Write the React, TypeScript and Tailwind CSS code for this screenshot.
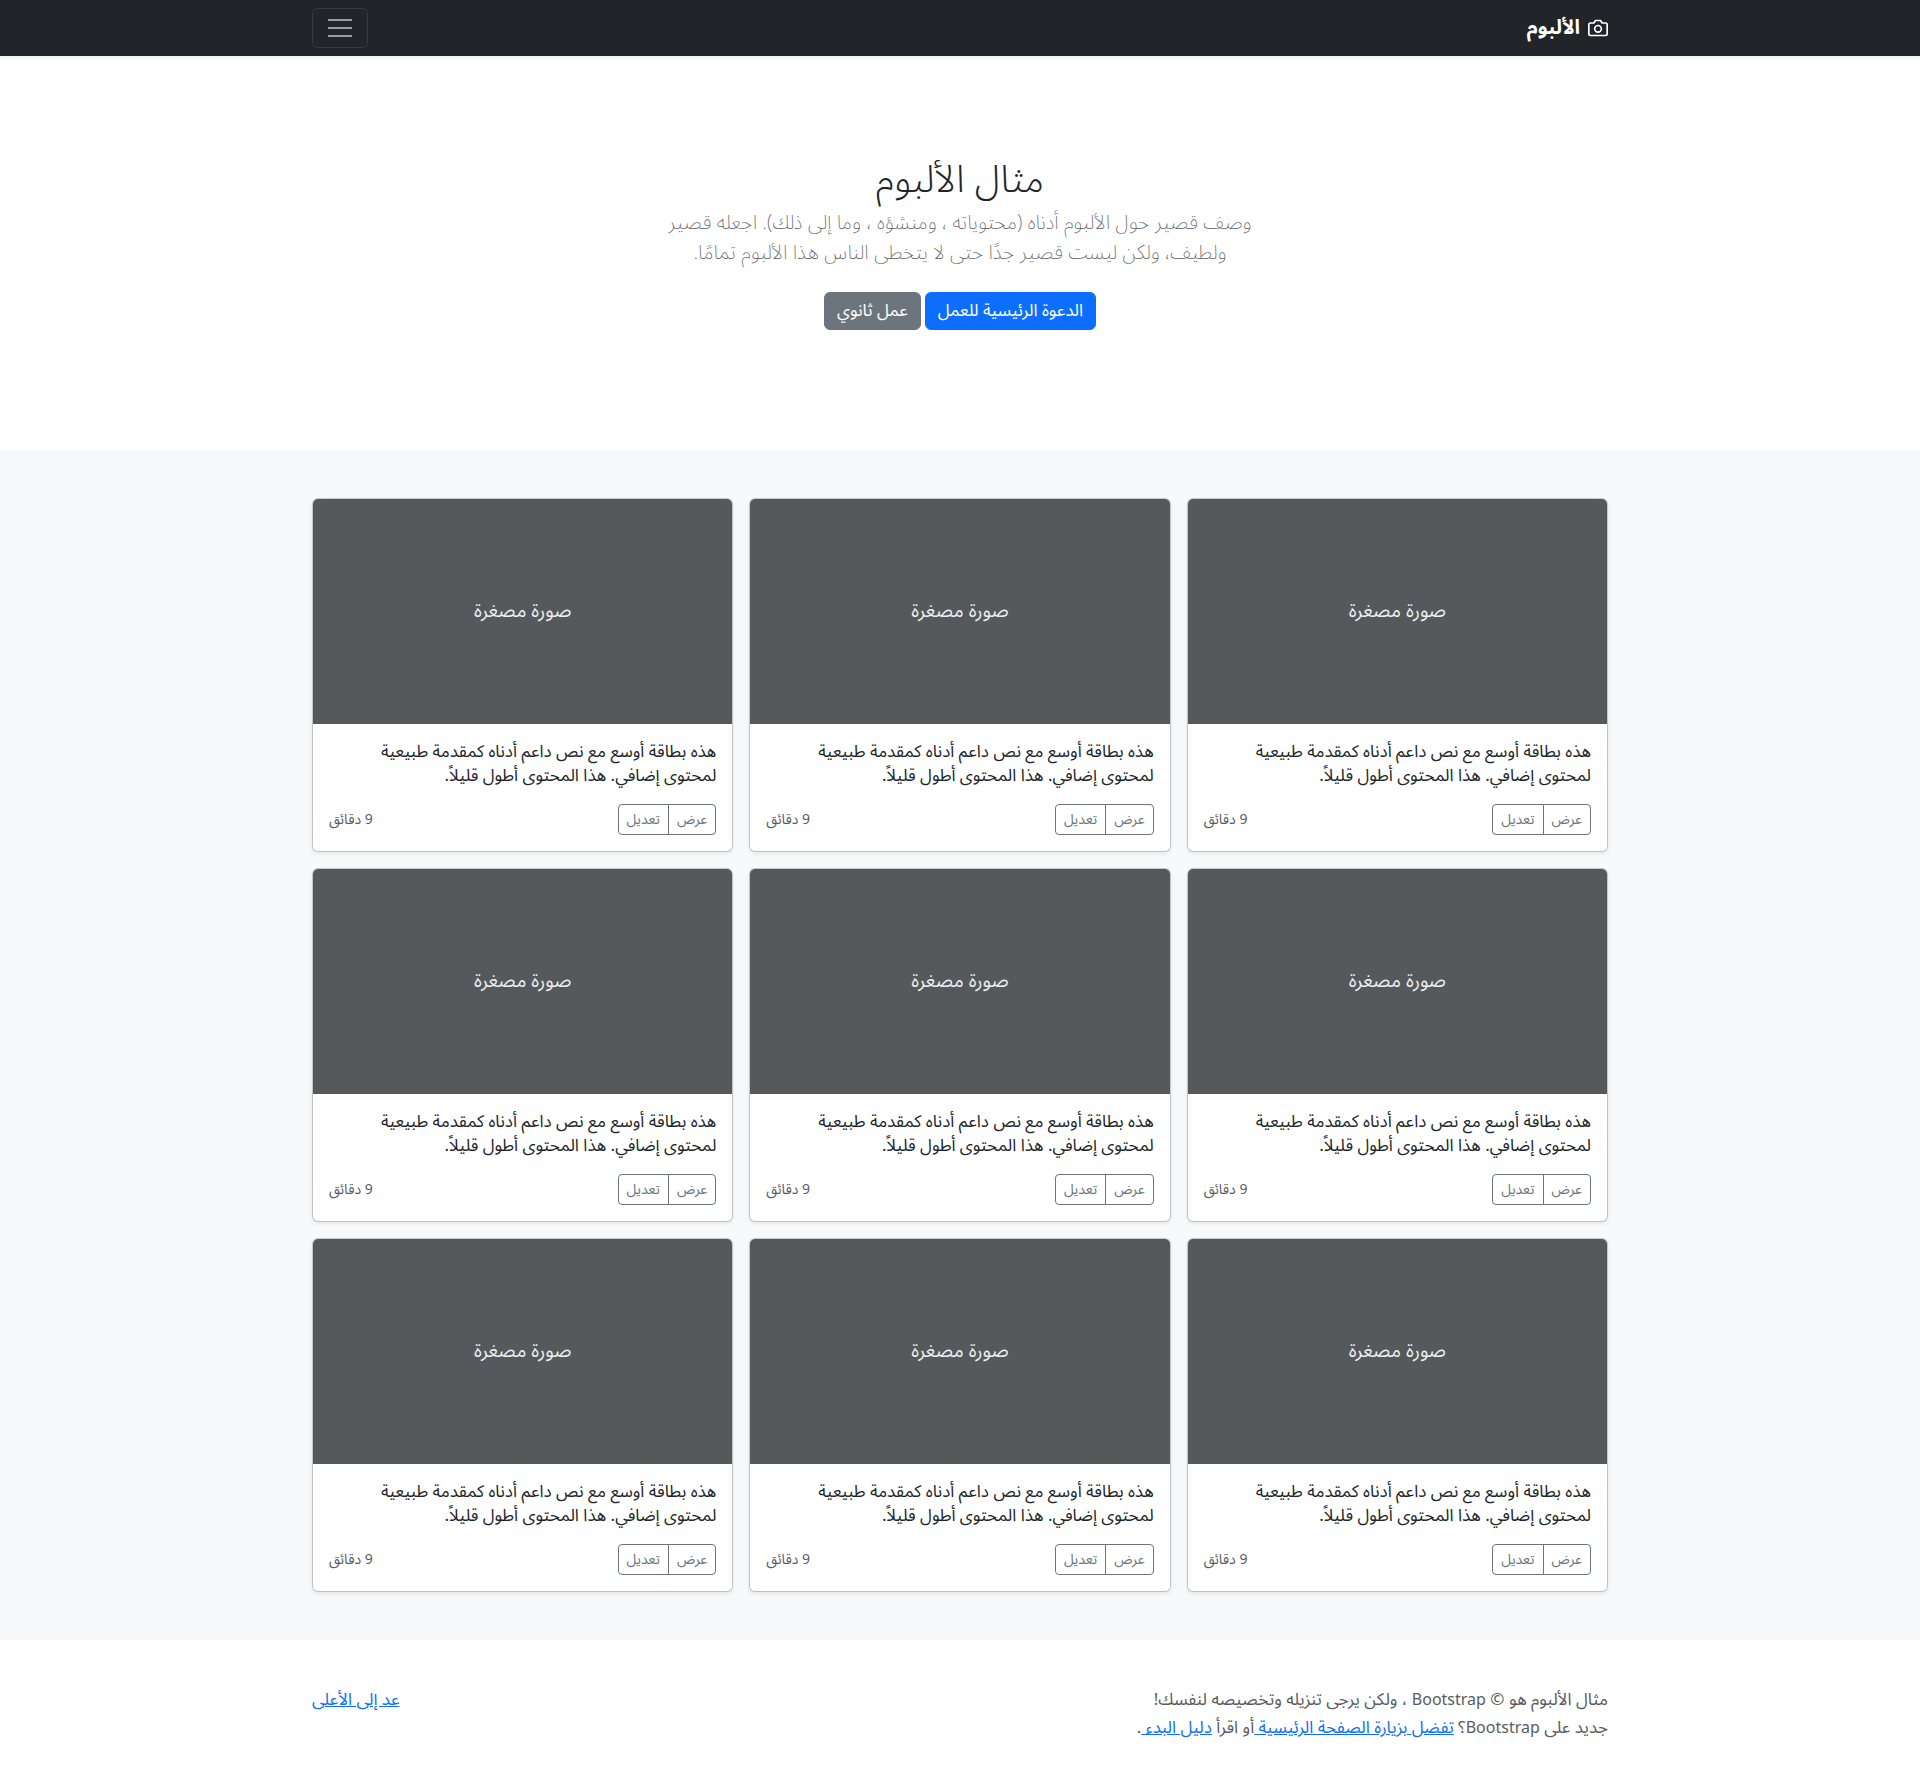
const cards = Array.from({ length: 9 }, (_, i) => i);

function CameraIcon() {
  return (
    <svg
      width="20"
      height="20"
      viewBox="0 0 24 24"
      fill="none"
      stroke="currentColor"
      strokeWidth="2"
      strokeLinecap="round"
      strokeLinejoin="round"
      aria-hidden="true"
    >
      <path d="M23 19a2 2 0 0 1-2 2H3a2 2 0 0 1-2-2V8a2 2 0 0 1 2-2h4l2-3h6l2 3h4a2 2 0 0 1 2 2z" />
      <circle cx="12" cy="13" r="4" />
    </svg>
  );
}

function Header() {
  return (
    <header className="relative bg-[#212529] shadow-[0_2px_4px_rgba(0,0,0,0.075)]">
      <div className="mx-auto flex max-w-[1320px] items-center justify-between px-3 py-2">
        <a href="#" className="flex items-center gap-2 text-[20px] leading-[30px] font-bold text-white">
          <CameraIcon />
          <span>الألبوم</span>
        </a>
        <button
          type="button"
          aria-label="تبديل التنقل"
          className="flex h-10 w-14 items-center justify-center rounded-md border border-white/10"
        >
          <svg width="30" height="30" viewBox="0 0 30 30" fill="none" stroke="rgba(255,255,255,0.55)" strokeWidth="2" aria-hidden="true">
            <path d="M3 7h24M3 15h24M3 23h24" />
          </svg>
        </button>
      </div>
    </header>
  );
}

function Hero() {
  return (
    <section className="px-3 py-24 text-center">
      <div className="mx-auto max-w-[636px]">
        <h1 className="mb-1 pt-1 text-[38px] leading-[48px] font-light">مثال الألبوم</h1>
        <p className="mb-6 text-[20px] leading-[30px] font-extralight text-[#595c5f]">
          وصف قصير حول الألبوم أدناه (محتوياته ، ومنشؤه ، وما إلى ذلك). اجعله قصير ولطيف، ولكن ليست قصير جدًا حتى لا يتخطى الناس هذا الألبوم تمامًا.
        </p>
        <p className="mb-6 flex justify-center gap-1">
          <a href="#" className="rounded-md border border-[#0d6efd] bg-[#0d6efd] px-3 py-1.5 text-[17px] leading-6 text-white">
            الدعوة الرئيسية للعمل
          </a>
          <a href="#" className="rounded-md border border-[#6c757d] bg-[#6c757d] px-3 py-1.5 text-[17px] leading-6 text-white">
            عمل ثانوي
          </a>
        </p>
      </div>
    </section>
  );
}

function Card() {
  return (
    <article className="flex flex-col overflow-hidden rounded-md border border-black/[0.175] bg-white bg-clip-padding shadow-[0_2px_4px_rgba(0,0,0,0.075)]">
      <div className="flex h-[225px] items-center justify-center bg-[#55595c] text-[19px] text-[#eceeef]">
        صورة مصغرة
      </div>
      <div className="p-4">
        <p className="mb-4 text-[17px] leading-6">
          هذه بطاقة أوسع مع نص داعم أدناه كمقدمة طبيعية لمحتوى إضافي. هذا المحتوى أطول قليلاً.
        </p>
        <div className="flex items-center justify-between">
          <div role="group" className="flex text-[14px] leading-[21px] text-[#6c757d]">
            <button type="button" className="rounded-s border border-[#6c757d] px-2 py-1">
              عرض
            </button>
            <button type="button" className="-ms-px rounded-e border border-[#6c757d] px-2 py-1">
              تعديل
            </button>
          </div>
          <small className="text-[14px] leading-[21px] text-[#595c5f]">9 دقائق</small>
        </div>
      </div>
    </article>
  );
}

function Footer() {
  return (
    <footer className="py-12 text-[17px] leading-6 text-[#595c5f]">
      <div className="mx-auto flex max-w-[1320px] items-start justify-between px-3">
        <div>
          <p className="mb-1">
            مثال الألبوم هو © <span className="text-[16px]">Bootstrap</span> ، ولكن يرجى تنزيله وتخصيصه لنفسك!
          </p>
          <p>
            جديد على <span className="text-[16px]">Bootstrap</span>؟{" "}
            <a href="#" className="text-[#0d6efd] underline">تفضل بزيارة الصفحة الرئيسية </a>
            أو اقرأ{" "}
            <a href="#" className="text-[#0d6efd] underline">دليل البدء </a>.
          </p>
        </div>
        <a href="#" className="text-[#0d6efd] underline">عد إلى الأعلى</a>
      </div>
    </footer>
  );
}

export default function App() {
  return (
    <div dir="rtl" lang="ar" className="bg-white font-['Noto_Sans_Arabic','Noto_Sans',sans-serif] text-[#212529]">
      <Header />
      <main>
        <Hero />
        <div className="bg-[#f8f9fa] py-12">
          <div className="mx-auto grid max-w-[1320px] grid-cols-1 gap-4 px-3 sm:grid-cols-2 md:grid-cols-3">
            {cards.map((id) => (
              <Card key={id} />
            ))}
          </div>
        </div>
      </main>
      <Footer />
    </div>
  );
}
